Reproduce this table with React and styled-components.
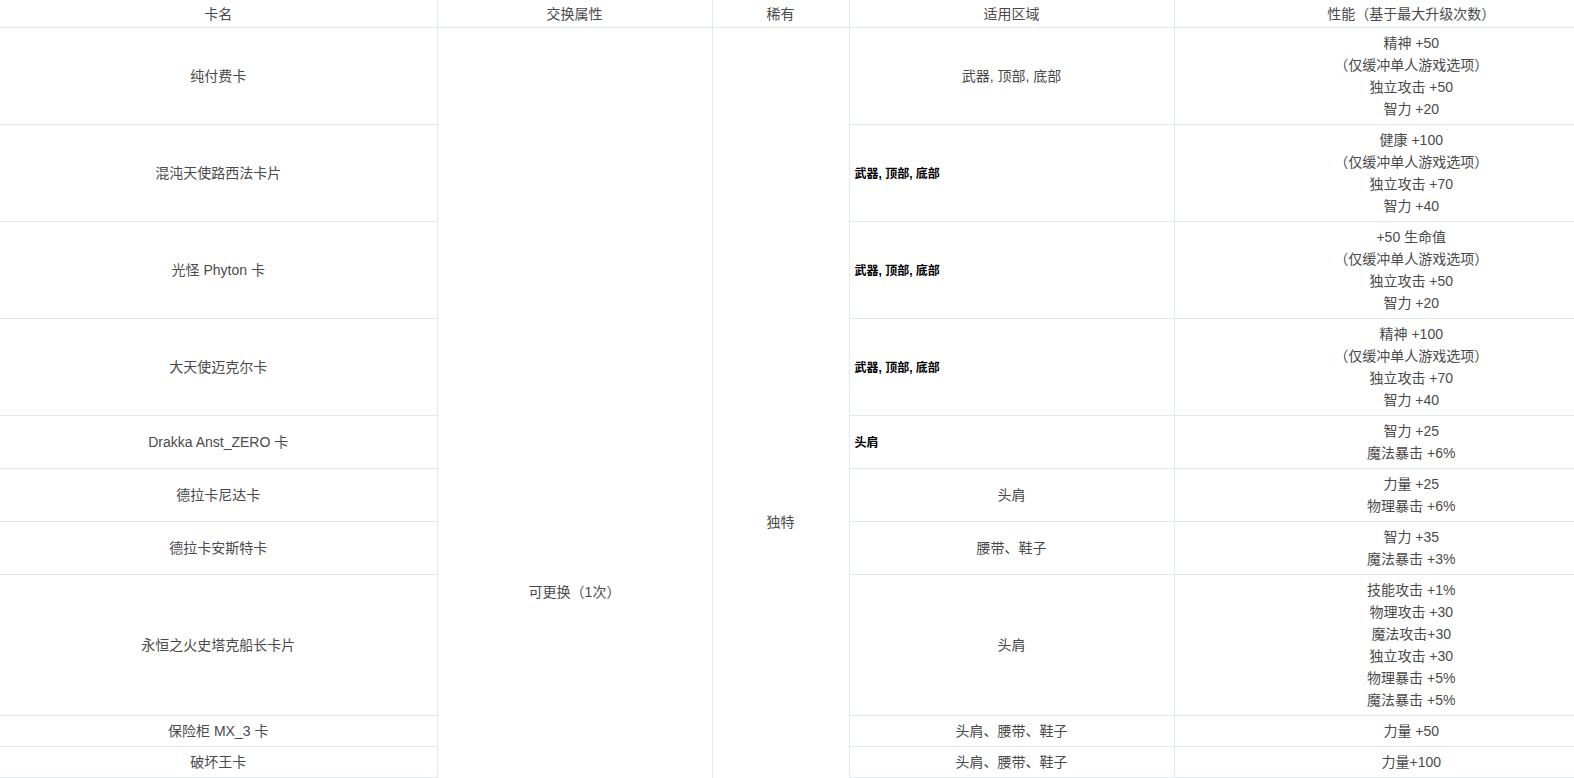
import React from 'react';
import styled, { createGlobalStyle } from 'styled-components';

const GlobalStyle = createGlobalStyle`
  html, body {
    margin: 0;
    padding: 0;
    overflow: hidden;
    background: #fff;
  }
`;

const Table = styled.table`
  width: 1648px;
  table-layout: fixed;
  border-collapse: collapse;
  border-style: hidden;
  font-family: 'Liberation Sans', 'Noto Sans CJK SC', sans-serif;
  font-size: 14px;
  line-height: 22px;
  color: #4a4a4a;
`;

const HeadCell = styled.th`
  font-weight: normal;
  padding: 3px 5px 2px;
  text-align: center;
  border: 1px solid #e1eaf3;
`;

const Cell = styled.td`
  padding: 4px 5px;
  vertical-align: middle;
  text-align: ${props => (props.$left ? 'left' : 'center')};
  border: 1px solid #e1eaf3;
`;

const Tag = styled.b`
  font-size: 12px;
  color: #000;
`;

const columns = [
  { title: '卡名', width: 437 },
  { title: '交换属性', width: 275 },
  { title: '稀有', width: 137 },
  { title: '适用区域', width: 325 },
  { title: '性能（基于最大升级次数）', width: 474 },
];

const buffNote = '（仅缓冲单人游戏选项）';

const cards = [
  { name: '纯付费卡', area: '武器, 顶部, 底部', perf: ['精神 +50', buffNote, '独立攻击 +50', '智力 +20'] },
  { name: '混沌天使路西法卡片', area: '武器, 顶部, 底部', bold: true, perf: ['健康 +100', buffNote, '独立攻击 +70', '智力 +40'] },
  { name: '光怪 Phyton 卡', area: '武器, 顶部, 底部', bold: true, perf: ['+50 生命值', buffNote, '独立攻击 +50', '智力 +20'] },
  { name: '大天使迈克尔卡', area: '武器, 顶部, 底部', bold: true, perf: ['精神 +100', buffNote, '独立攻击 +70', '智力 +40'] },
  { name: 'Drakka Anst_ZERO 卡', area: '头肩', bold: true, perf: ['智力 +25', '魔法暴击 +6%'] },
  { name: '德拉卡尼达卡', area: '头肩', perf: ['力量 +25', '物理暴击 +6%'] },
  { name: '德拉卡安斯特卡', area: '腰带、鞋子', perf: ['智力 +35', '魔法暴击 +3%'] },
  {
    name: '永恒之火史塔克船长卡片',
    area: '头肩',
    perf: ['技能攻击 +1%', '物理攻击 +30', '魔法攻击+30', '独立攻击 +30', '物理暴击 +5%', '魔法暴击 +5%'],
  },
  { name: '保险柜 MX_3 卡', area: '头肩、腰带、鞋子', perf: ['力量 +50'] },
  { name: '破坏王卡', area: '头肩、腰带、鞋子', perf: ['力量+100'] },
  // below the fold
  { name: '暗黑骑士卡', area: '武器', perf: ['力量 +50', buffNote, '独立攻击 +50', '物理暴击 +3%'] },
  {
    name: '深渊领主卡片',
    area: '上衣、下装',
    perf: ['技能攻击 +1%', '物理攻击 +30', '魔法攻击 +30', '独立攻击 +30', '物理暴击 +5%', '魔法暴击 +5%'],
  },
  {
    name: '冰霜女王卡片',
    area: '项链、手镯',
    rarity: '稀有',
    perf: ['技能攻击 +1%', '物理攻击 +25', '魔法攻击 +25', '独立攻击 +25', '物理暴击 +3%', '魔法暴击 +3%'],
  },
];

export default function App() {
  return (
    <>
      <GlobalStyle />
      <Table>
        <colgroup>
          {columns.map(c => (
            <col key={c.title} style={{ width: c.width }} />
          ))}
        </colgroup>
        <thead>
          <tr>
            {columns.map(c => (
              <HeadCell key={c.title}>{c.title}</HeadCell>
            ))}
          </tr>
        </thead>
        <tbody>
          {cards.map((card, i) => (
            <tr key={card.name}>
              <Cell>{card.name}</Cell>
              {i === 0 && <Cell rowSpan={cards.length}>可更换（1次）</Cell>}
              {i === 0 && <Cell rowSpan={12}>独特</Cell>}
              {card.rarity && <Cell>{card.rarity}</Cell>}
              {card.bold ? (
                <Cell $left>
                  <Tag>{card.area}</Tag>
                </Cell>
              ) : (
                <Cell>{card.area}</Cell>
              )}
              <Cell>
                {card.perf.map((line, j) => (
                  <div key={j}>{line}</div>
                ))}
              </Cell>
            </tr>
          ))}
        </tbody>
      </Table>
    </>
  );
}
